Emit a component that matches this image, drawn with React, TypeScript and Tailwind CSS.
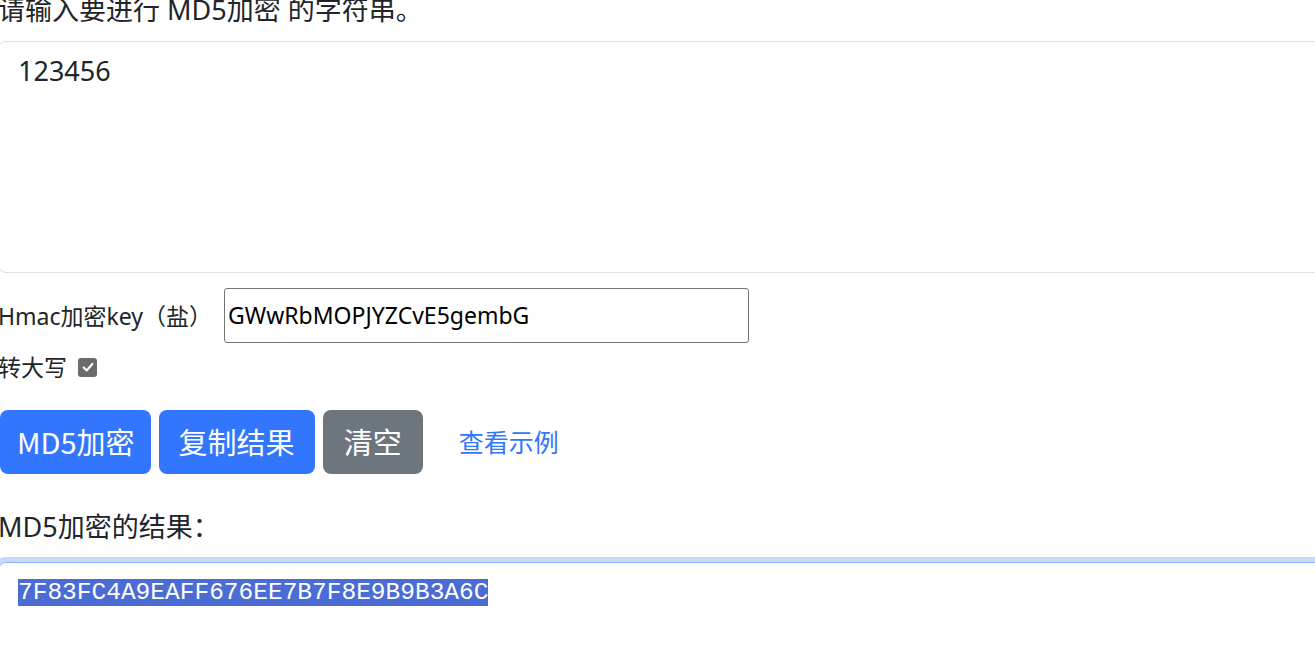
export default function App() {
  return (
    <div className="w-[1315px] h-[664px] overflow-hidden bg-white">
      <div className="-ml-[2px] -mt-[10px] w-[1340px] text-[#212529] font-['Noto_Sans','Noto_Sans_CJK_SC',sans-serif]">
        <div className="text-[27px] leading-[40px] whitespace-nowrap">请输入要进行 MD5加密 的字符串。</div>
        <div className="mt-[11px] h-[232px] rounded-[8px] border border-[#dcdfe3] px-[19px] pt-[9px] text-[27px] leading-[40px]">
          123456
        </div>
        <div className="mt-[15px] flex items-center">
          <span className="text-[23px] leading-[32px] whitespace-nowrap">Hmac加密key（盐）</span>
          <div className="ml-[12px] flex h-[55px] w-[525px] items-center rounded-[3px] border border-[#767676] px-[3px] text-[23px] text-black">
            GWwRbMOPJYZCvE5gembG
          </div>
        </div>
        <div className="mt-[8px] flex items-center">
          <span className="text-[23px] leading-[32px]">转大写</span>
          <span className="ml-[11px] flex h-[19px] w-[19px] items-center justify-center rounded-[3px] bg-[#6b6b6b]">
            <svg viewBox="0 0 16 16" className="h-[14px] w-[14px]">
              <path d="M3 8.5 L6.5 12 L13 4.5" fill="none" stroke="white" strokeWidth="2.4" strokeLinecap="round" strokeLinejoin="round" />
            </svg>
          </span>
        </div>
        <div className="ml-[2px] mt-[27px] flex items-center gap-[8px] font-['Noto_Sans_CJK_SC',sans-serif]">
          <button className="h-[64px] rounded-[8px] bg-[#3176fd] pl-[17px] pr-[16px] text-[29px] text-white">MD5加密</button>
          <button className="h-[64px] rounded-[8px] bg-[#3176fd] px-[20px] text-[29px] text-white">复制结果</button>
          <button className="h-[64px] rounded-[8px] bg-[#6e767d] px-[21px] text-[29px] text-white">清空</button>
          <button className="h-[64px] px-[28px] text-[25px] text-[#3176fd]">查看示例</button>
        </div>
        <div className="mt-[33px] text-[27px] leading-[40px] whitespace-nowrap">MD5加密的结果：</div>
        <div className="mt-[15px] h-[200px] rounded-[8px] border border-[#8ab4fc] px-[19px] pt-[11px] shadow-[0_0_0_5px_#c8dafb]">
          <span className="bg-[#4a6cd4] font-['Liberation_Mono',monospace] text-[24.5px] leading-[37px] text-white">
            7F83FC4A9EAFF676EE7B7F8E9B9B3A6C
          </span>
        </div>
      </div>
    </div>
  );
}
